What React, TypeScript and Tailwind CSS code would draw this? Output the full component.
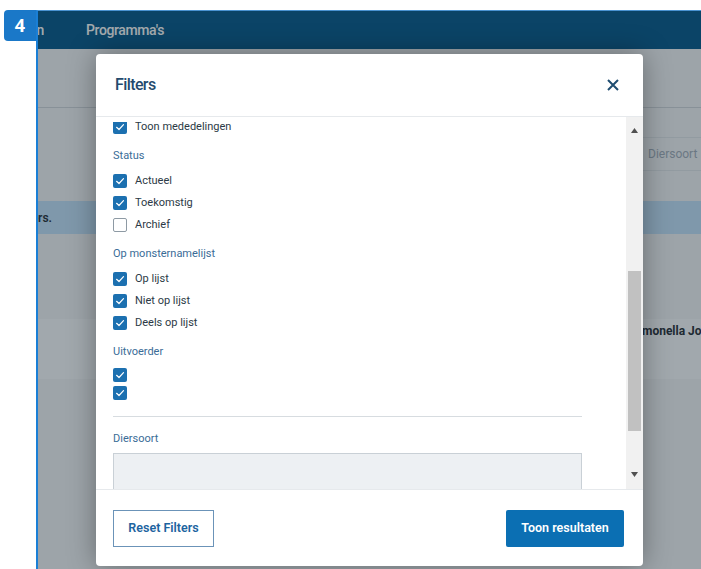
import React from "react";

const Check = () => (
  <svg width="10" height="10" viewBox="0 0 10 10" fill="none">
    <path d="M1.6 5.3 L4 7.5 L8.5 2.7" stroke="white" strokeWidth="1.2" strokeLinecap="round" strokeLinejoin="round" />
  </svg>
);

const Box = ({ checked }: { checked: boolean }) =>
  checked ? (
    <span className="w-[14px] h-[14px] rounded-[2px] bg-[#1c70b0] flex items-center justify-center shrink-0">
      <Check />
    </span>
  ) : (
    <span className="w-[14px] h-[14px] rounded-[2px] border border-[#8e9aa4] bg-white shrink-0" />
  );

const Option = ({ label, checked = true }: { label: string; checked?: boolean }) => (
  <div className="h-[22px] flex items-center gap-2">
    <Box checked={checked} />
    <span className="text-[11px] text-[#2c3a46]">{label}</span>
  </div>
);

const GroupLabel = ({ children }: { children: React.ReactNode }) => (
  <div className="h-[22px] flex items-center text-[11px] text-[#3a6c97] mt-[7px] mb-[3px]">{children}</div>
);

export default function App() {
  return (
    <div className="relative w-full h-[569px] bg-white overflow-hidden font-['Roboto',sans-serif]">
      <div className="pl-[36px] pt-[10px] h-full">
        <div className="relative h-full border-l-2 border-t border-[#1a7fd6] border-t-[#4a93d2] overflow-hidden bg-[#f3f5f7]">
          {/* top navigation */}
          <div className="h-[38px] bg-[#005689] flex items-center text-white font-medium text-[14px] tracking-[-0.4px]">
            <div className="w-[6px] overflow-hidden flex justify-end shrink-0">
              <span className="whitespace-nowrap">Opdrachten</span>
            </div>
            <span className="ml-[42px]">Programma's</span>
          </div>

          {/* page behind the dialog */}
          <div className="h-[59px] border-b border-[#d0d6db]" />
          <div className="mt-[29px] flex">
            <div className="ml-[605px] w-[200px] h-[34px] border-y border-[#e2e6ea] flex items-center px-[5px] text-[12px] text-[#a1acb9]">
              Diersoort
            </div>
          </div>
          <div className="mt-[30px] h-[33px] bg-[#c1e1fa] flex items-center text-[12px] font-semibold text-[#1f2a33]">
            <div className="w-[14px] overflow-hidden flex justify-end shrink-0">
              <span className="whitespace-nowrap">Er zijn 24 programma's gevonden met de huidige filters.</span>
            </div>
          </div>
          <div className="mt-[85px] h-[60px] bg-[#fbfcfd] flex pt-[3px]">
            <span className="ml-[587px] whitespace-nowrap text-[12px] font-bold text-[#1f2a33]">Salmonella Jonge dieren</span>
          </div>

          <div className="absolute inset-0 bg-[#1c2a35]/40" />

          {/* filters dialog */}
          <div className="absolute left-[58px] top-[43px] w-[547px] h-[512px] bg-white rounded-[4px] shadow-[0_0_28px_rgba(0,0,0,0.35)] flex flex-col overflow-hidden">
            <div className="h-[63px] shrink-0 flex items-center justify-between pl-[19px] pr-[24px] border-b border-[#e6e9ec]">
              <span className="text-[16px] font-medium tracking-[-0.6px] text-[#234a6d]">Filters</span>
              <svg width="12" height="12" viewBox="0 0 12 12">
                <path d="M1 1 L11 11 M11 1 L1 11" stroke="#1f4d71" strokeWidth="2" />
              </svg>
            </div>

            <div className="flex-1 flex min-h-0">
              <div className="flex-1 pt-[5px] flex flex-col min-h-0">
                <div className="flex-1 overflow-hidden pl-[17px] pr-[44px]">
                  <div className="mt-[-6px]">
                    <Option label="Toon mededelingen" />
                    <GroupLabel>Status</GroupLabel>
                    <Option label="Actueel" />
                    <Option label="Toekomstig" />
                    <Option label="Archief" checked={false} />
                    <GroupLabel>Op monsternamelijst</GroupLabel>
                    <div className="mt-[1px]">
                      <Option label="Op lijst" />
                      <Option label="Niet op lijst" />
                      <Option label="Deels op lijst" />
                    </div>
                    <GroupLabel>Uitvoerder</GroupLabel>
                    <div className="mt-[2px]">
                      <div className="h-[18px] flex items-center"><Box checked /></div>
                      <div className="h-[18px] flex items-center"><Box checked /></div>
                    </div>
                    <div className="mt-[14px] border-t border-[#d7dce0]" />
                    <div className="mt-[11px] h-[22px] flex items-center text-[11px] text-[#3a6c97]">Diersoort</div>
                    <div className="mt-[3px] h-[60px] bg-[#edf0f3] border border-[#c9d0d6]" />
                  </div>
                </div>
              </div>

              {/* scrollbar */}
              <div className="w-[17px] bg-[#f1f1f1] flex flex-col items-center">
                <div className="h-[26px] flex items-center justify-center pt-[1px]">
                  <svg width="7" height="5" viewBox="0 0 7 5"><path d="M3.5 0 L7 5 L0 5 Z" fill="#505050" /></svg>
                </div>
                <div className="mt-[128px] w-[13px] h-[160px] bg-[#c1c1c1]" />
                <div className="mt-auto h-[26px] flex items-center justify-center pb-[4px]">
                  <svg width="7" height="5" viewBox="0 0 7 5"><path d="M0 0 L7 0 L3.5 5 Z" fill="#505050" /></svg>
                </div>
              </div>
            </div>

            <div className="h-[77px] shrink-0 border-t border-[#e6e9ec] flex items-center justify-between pl-[17px] pr-[19px]">
              <button className="w-[101px] h-[37px] border border-[#6b93b8] text-[12.5px] font-semibold text-[#1d64a0] bg-white">
                Reset Filters
              </button>
              <button className="w-[118px] h-[37px] rounded-[2px] bg-[#0b6fb3] text-[12.5px] font-semibold text-white">
                Toon resultaten
              </button>
            </div>
          </div>
        </div>
      </div>

      {/* step badge */}
      <div className="absolute left-[4px] top-[10px] w-[32px] h-[31px] rounded-l-[4px] bg-[#1a78c8] flex items-center justify-center text-white font-bold text-[18px] font-['Open_Sans',sans-serif]">
        4
      </div>
    </div>
  );
}
